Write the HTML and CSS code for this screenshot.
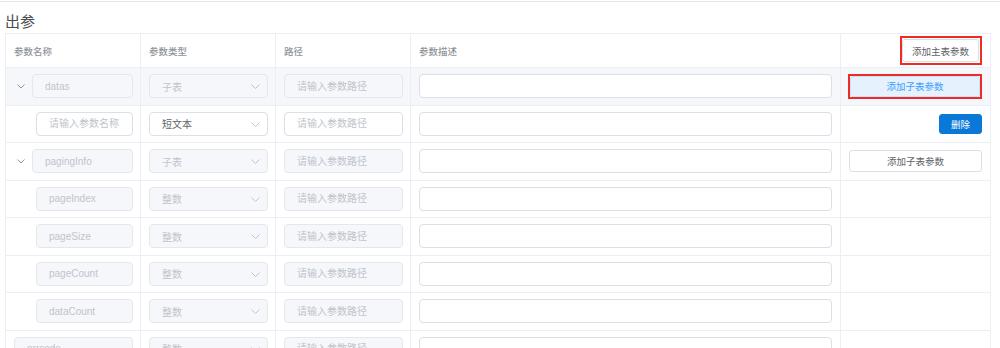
FILE: index.html
```html
<!DOCTYPE html>
<html lang="zh-CN">
<head>
    <meta charset="UTF-8">
    <meta name="viewport" content="width=device-width, initial-scale=1.0">
    <title>出参</title>
    <link rel="stylesheet" href="styles.css">
</head>
<body>
    <div class="divider"></div>
    <h3 class="section-title">出参</h3>

    <table class="param-table">
        <colgroup>
            <col class="col-name">
            <col class="col-type">
            <col class="col-path">
            <col class="col-desc">
            <col class="col-op">
        </colgroup>
        <thead>
            <tr>
                <th>参数名称</th>
                <th>参数类型</th>
                <th>路径</th>
                <th>参数描述</th>
                <th class="op-cell"><span class="mark"><button class="btn btn-default btn-main">添加主表参数</button></span></th>
            </tr>
        </thead>
        <tbody>
            <tr class="row-hover">
                <td><div class="name-cell"><span class="expand"><svg width="8" height="5" viewBox="0 0 8 5"><polyline points="0.5,0.5 4,4 7.5,0.5" fill="none" stroke="#909399" stroke-width="1"/></svg></span><input class="input is-disabled" value="datas" disabled></div></td>
                <td><div class="select is-disabled"><input class="input is-disabled" value="子表" disabled><svg class="arrow" width="9" height="5" viewBox="0 0 9 5"><polyline points="0.5,0.5 4.5,4.5 8.5,0.5" fill="none" stroke="#c0c4cc" stroke-width="1"/></svg></div></td>
                <td><input class="input is-disabled" placeholder="请输入参数路径" disabled></td>
                <td><input class="input"></td>
                <td class="op-cell"><span class="mark mark-block"><button class="btn btn-hover btn-block">添加子表参数</button></span></td>
            </tr>
            <tr>
                <td><div class="name-cell child"><input class="input" placeholder="请输入参数名称"></div></td>
                <td><div class="select"><input class="input" value="短文本" readonly><svg class="arrow" width="9" height="5" viewBox="0 0 9 5"><polyline points="0.5,0.5 4.5,4.5 8.5,0.5" fill="none" stroke="#c0c4cc" stroke-width="1"/></svg></div></td>
                <td><input class="input" placeholder="请输入参数路径"></td>
                <td><input class="input"></td>
                <td class="op-cell"><button class="btn btn-primary">删除</button></td>
            </tr>
            <tr>
                <td><div class="name-cell"><span class="expand"><svg width="8" height="5" viewBox="0 0 8 5"><polyline points="0.5,0.5 4,4 7.5,0.5" fill="none" stroke="#909399" stroke-width="1"/></svg></span><input class="input is-disabled" value="pagingInfo" disabled></div></td>
                <td><div class="select is-disabled"><input class="input is-disabled" value="子表" disabled><svg class="arrow" width="9" height="5" viewBox="0 0 9 5"><polyline points="0.5,0.5 4.5,4.5 8.5,0.5" fill="none" stroke="#c0c4cc" stroke-width="1"/></svg></div></td>
                <td><input class="input is-disabled" placeholder="请输入参数路径" disabled></td>
                <td><input class="input"></td>
                <td class="op-cell"><button class="btn btn-default btn-block">添加子表参数</button></td>
            </tr>
            <tr>
                <td><div class="name-cell child"><input class="input is-disabled" value="pageIndex" disabled></div></td>
                <td><div class="select is-disabled"><input class="input is-disabled" value="整数" disabled><svg class="arrow" width="9" height="5" viewBox="0 0 9 5"><polyline points="0.5,0.5 4.5,4.5 8.5,0.5" fill="none" stroke="#c0c4cc" stroke-width="1"/></svg></div></td>
                <td><input class="input is-disabled" placeholder="请输入参数路径" disabled></td>
                <td><input class="input"></td>
                <td class="op-cell"></td>
            </tr>
            <tr>
                <td><div class="name-cell child"><input class="input is-disabled" value="pageSize" disabled></div></td>
                <td><div class="select is-disabled"><input class="input is-disabled" value="整数" disabled><svg class="arrow" width="9" height="5" viewBox="0 0 9 5"><polyline points="0.5,0.5 4.5,4.5 8.5,0.5" fill="none" stroke="#c0c4cc" stroke-width="1"/></svg></div></td>
                <td><input class="input is-disabled" placeholder="请输入参数路径" disabled></td>
                <td><input class="input"></td>
                <td class="op-cell"></td>
            </tr>
            <tr>
                <td><div class="name-cell child"><input class="input is-disabled" value="pageCount" disabled></div></td>
                <td><div class="select is-disabled"><input class="input is-disabled" value="整数" disabled><svg class="arrow" width="9" height="5" viewBox="0 0 9 5"><polyline points="0.5,0.5 4.5,4.5 8.5,0.5" fill="none" stroke="#c0c4cc" stroke-width="1"/></svg></div></td>
                <td><input class="input is-disabled" placeholder="请输入参数路径" disabled></td>
                <td><input class="input"></td>
                <td class="op-cell"></td>
            </tr>
            <tr>
                <td><div class="name-cell child"><input class="input is-disabled" value="dataCount" disabled></div></td>
                <td><div class="select is-disabled"><input class="input is-disabled" value="整数" disabled><svg class="arrow" width="9" height="5" viewBox="0 0 9 5"><polyline points="0.5,0.5 4.5,4.5 8.5,0.5" fill="none" stroke="#c0c4cc" stroke-width="1"/></svg></div></td>
                <td><input class="input is-disabled" placeholder="请输入参数路径" disabled></td>
                <td><input class="input"></td>
                <td class="op-cell"></td>
            </tr>
            <tr>
                <td><div class="name-cell"><input class="input is-disabled" value="errcode" disabled></div></td>
                <td><div class="select is-disabled"><input class="input is-disabled" value="整数" disabled><svg class="arrow" width="9" height="5" viewBox="0 0 9 5"><polyline points="0.5,0.5 4.5,4.5 8.5,0.5" fill="none" stroke="#c0c4cc" stroke-width="1"/></svg></div></td>
                <td><input class="input is-disabled" placeholder="请输入参数路径" disabled></td>
                <td><input class="input"></td>
                <td class="op-cell"></td>
            </tr>
        </tbody>
    </table>
</body>
</html>
```

FILE: styles.css
```css
html {
    overflow: hidden;
}

body {
    font-family: "Liberation Sans", "Noto Sans CJK SC", sans-serif;
    background-color: #fff;
    color: #606266;
    margin: 0;
    padding: 0;
    height: 348px;
    overflow: hidden;
}

.divider {
    height: 1px;
    margin-top: 1px;
    background-color: #e6e8eb;
}

.section-title {
    margin: 0;
    padding: 9px 5px 0;
    line-height: 22px;
    font-size: 15px;
    font-weight: normal;
    color: #4a4c50;
}

/* table */
.param-table {
    margin-left: 5px;
    width: 985px;
    border-collapse: collapse;
    table-layout: fixed;
}

.col-name,
.col-type,
.col-path {
    width: 135px;
}

.col-desc {
    width: 430px;
}

.col-op {
    width: 150px;
}

.param-table th,
.param-table td {
    border: 1px solid #ebeef5;
    padding: 0 7px 0 8px;
    text-align: left;
    vertical-align: middle;
}

.param-table th {
    height: 33px;
    font-size: 9.5px;
    font-weight: 500;
    color: #909399;
}

.param-table tbody tr {
    height: 37.5px;
}

.param-table td:nth-child(4) {
    padding-right: 8px;
}

.param-table .op-cell {
    text-align: right;
    padding-right: 8px;
}

.row-hover td {
    background-color: #f5f7fa;
}

/* inputs */
.input {
    display: block;
    box-sizing: border-box;
    width: 100%;
    height: 24px;
    padding: 0 12px;
    font-family: inherit;
    font-size: 10px;
    color: #606266;
    background-color: #fff;
    border: 1px solid #dcdfe6;
    border-radius: 4px;
    outline: none;
}

.input::placeholder {
    color: #c0c4cc;
}

.input.is-disabled {
    background-color: #f5f7fa;
    border-color: #e4e7ed;
    color: #c0c4cc;
    cursor: not-allowed;
}

.name-cell {
    display: flex;
    align-items: center;
}

.name-cell.child {
    padding-left: 22px;
}

.expand {
    flex: 0 0 18px;
    display: flex;
    align-items: center;
    padding-left: 3px;
    box-sizing: border-box;
}

.select {
    position: relative;
}

.select .arrow {
    position: absolute;
    right: 8px;
    top: 10px;
}

/* buttons */
.btn {
    box-sizing: border-box;
    height: 23px;
    padding: 0 12px;
    font-family: inherit;
    font-size: 9.5px;
    border-radius: 3px;
    cursor: pointer;
    vertical-align: middle;
}

.btn-default {
    background-color: #fff;
    border: 1px solid #dcdfe6;
    color: #606266;
}

.btn-hover {
    background-color: #e5f1fc;
    border: 1px solid #c6e2ff;
    color: #409eff;
}

.btn-main {
    display: block;
    width: 77px;
    padding: 0;
}

.btn-block {
    display: block;
    width: 100%;
    height: 22px;
}

.btn-primary {
    height: 20px;
    padding: 0 11px;
    background-color: #0a78d6;
    border: 1px solid #0a78d6;
    color: #fff;
}

/* red review marks */
.mark {
    display: inline-block;
    vertical-align: middle;
    padding: 1px 1px 1px 0;
    border: 2px solid #ee2b25;
}

.mark-block {
    display: block;
    margin-left: -1px;
    padding: 0;
}

.mark-block .btn-block {
    height: 21px;
}
```
